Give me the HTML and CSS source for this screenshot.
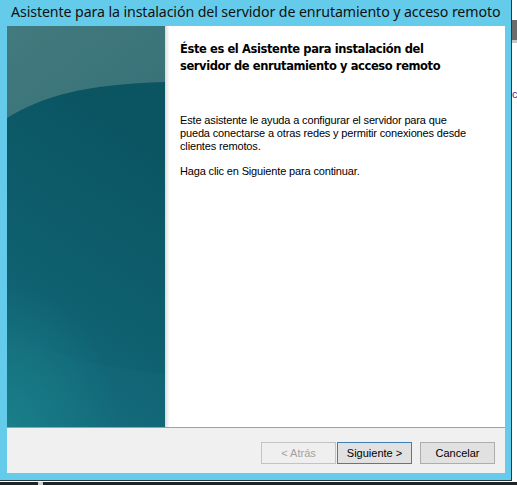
FILE: index.html
```html
<!DOCTYPE html>
<html lang="es">
<head>
<meta charset="utf-8">
<title>Asistente</title>
<link rel="stylesheet" href="styles.css">
</head>
<body>
<div class="screen">
  <div class="window">
    <div class="titlebar">Asistente para la instalación del servidor de enrutamiento y acceso remoto</div>
    <div class="client">
      <div class="main">
        <div class="banner">
          <svg width="158" height="401" viewBox="0 0 158 401" xmlns="http://www.w3.org/2000/svg">
            <defs>
              <linearGradient id="gTop" x1="0" y1="0" x2="0.3" y2="1">
                <stop offset="0" stop-color="#427a7e"/>
                <stop offset="1" stop-color="#2b676f"/>
              </linearGradient>
              <linearGradient id="gBody" x1="0.3" y1="0" x2="0" y2="1">
                <stop offset="0" stop-color="#0b5563"/>
                <stop offset="0.5" stop-color="#0e5f6e"/>
                <stop offset="1" stop-color="#166e80"/>
              </linearGradient>
              <radialGradient id="gGlow" cx="0" cy="1" r="1">
                <stop offset="0" stop-color="#1b8a8f" stop-opacity="0.6"/>
                <stop offset="1" stop-color="#1b8a8f" stop-opacity="0"/>
              </radialGradient>
            </defs>
            <rect x="0" y="0" width="158" height="401" fill="url(#gTop)"/>
            <path d="M0 92 C 35 70, 80 58, 158 56 L158 401 L0 401 Z" fill="url(#gBody)"/>
            <path d="M0 305 C 30 322, 70 338, 158 348 L158 401 L0 401 Z" fill="#1a7f8c" opacity="0.1"/>
            <rect x="0" y="260" width="110" height="141" fill="url(#gGlow)"/>
          </svg>
        </div>
        <div class="shade"></div>
        <div class="content">
          <h1 class="heading">Éste es el Asistente para instalación del servidor de enrutamiento y acceso remoto</h1>
          <p class="text">Este asistente le ayuda a configurar el servidor para que pueda conectarse a otras redes y permitir conexiones desde clientes remotos.</p>
          <p class="text">Haga clic en Siguiente para continuar.</p>
        </div>
      </div>
      <div class="footer">
        <button class="btn disabled" disabled>&lt; Atrás</button>
        <button class="btn default">Siguiente &gt;</button>
        <button class="btn cancel">Cancelar</button>
      </div>
    </div>
  </div>
  <div class="desk">
    <div class="desk-bar"></div>
    <div class="desk-line"></div>
    <div class="desk-text">cl</div>
  </div>
</div>
<div class="taskbar"><span class="task-item"></span></div>
</body>
</html>
```

FILE: styles.css
```css
html, body {
  margin: 0;
  padding: 0;
  background: #ffffff;
  overflow: hidden;
}

.screen {
  display: flex;
  width: 517px;
  height: 482px;
}

.window {
  flex: none;
  width: 512px;
  height: 481px;
  box-sizing: border-box;
  background: #65cbea;
  border-right: 1px solid #2a3a40;
  border-bottom: 1px solid #2a3a40;
  padding: 0 6px 7px 7px;
  display: flex;
  flex-direction: column;
}

.titlebar {
  height: 26px;
  flex: none;
  font-family: "Noto Sans", "Open Sans", sans-serif;
  font-size: 14.2px;
  line-height: 24px;
  color: #111;
  white-space: nowrap;
  margin-left: 4px;
  letter-spacing: -0.1px;
}

.client {
  flex: 1;
  display: flex;
  flex-direction: column;
  background: #f0f0f0;
}

.main {
  height: 401px;
  flex: none;
  display: flex;
  background: #ffffff;
  border-bottom: 1px solid #a0a0a0;
}

.banner {
  width: 158px;
  flex: none;
  height: 401px;
}

.banner svg {
  display: block;
}

.shade {
  width: 5px;
  flex: none;
  background: linear-gradient(to right, #d9d9d9, #f4f4f4 60%, #ffffff);
}

.content {
  flex: 1;
  padding: 15px 10px 0 10px;
  font-family: "Liberation Sans", Arial, sans-serif;
  color: #000;
}

.heading {
  margin: 0 0 39px 0;
  font-family: "DejaVu Sans", Verdana, sans-serif;
  font-weight: bold;
  font-size: 11.5px;
  line-height: 17px;
  letter-spacing: -0.4px;
  width: 290px;
}

.text {
  margin: 0 0 12px 0;
  font-size: 11px;
  line-height: 13px;
  letter-spacing: -0.15px;
  width: 288px;
}

.footer {
  flex: 1;
  display: flex;
  align-items: flex-start;
  padding: 14px 10px 0 0;
  justify-content: flex-end;
}

.btn {
  width: 75px;
  height: 22px;
  box-sizing: border-box;
  font-family: "Liberation Sans", Arial, sans-serif;
  font-size: 11px;
  padding: 0;
  margin: 0;
  background: #e1e1e1;
  border: 1px solid #adadad;
  color: #000;
}

.btn.disabled {
  background: #efefef;
  border-color: #c3c3c3;
  color: #a2a2a2;
}

.btn.default {
  margin-left: 1px;
  border-color: #3f7fb3;
}

.btn.cancel {
  margin-left: 8px;
}

.desk {
  flex: 1;
  display: flex;
  flex-direction: column;
  background: #ffffff;
  overflow: hidden;
}

.desk-bar {
  height: 20px;
  margin-top: 20px;
  background: #6c6c6c;
}

.desk-line {
  height: 3px;
  background: #c8c8c8;
}

.desk-text {
  margin-top: 45px;
  font-family: "Liberation Sans", Arial, sans-serif;
  font-size: 11px;
  color: #5a2a7a;
  white-space: nowrap;
}

.taskbar {
  height: 3px;
  background: #1f2427;
  padding-left: 38px;
}

.task-item {
  display: block;
  width: 5px;
  height: 3px;
  background: #cfcfcf;
}
```
